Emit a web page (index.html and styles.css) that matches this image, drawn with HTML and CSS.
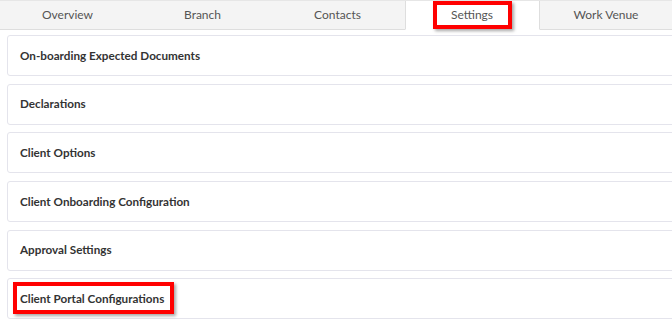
FILE: index.html
```html
<!DOCTYPE html>
<html>
<head>
<meta charset="utf-8">
<link rel="stylesheet" href="styles.css">
</head>
<body>
<div class="tabs">
  <div class="tab">Overview</div>
  <div class="tab">Branch</div>
  <div class="tab">Contacts</div>
  <div class="tab active"><span class="mark mark-tab">Settings</span></div>
  <div class="tab last">Work Venue</div>
</div>
<div class="cards">
  <div class="card">On-boarding Expected Documents</div>
  <div class="card">Declarations</div>
  <div class="card">Client Options</div>
  <div class="card">Client Onboarding Configuration</div>
  <div class="card">Approval Settings</div>
  <div class="card"><span class="mark mark-card">Client Portal Configurations</span></div>
</div>
</body>
</html>
```

FILE: styles.css
```css
* { box-sizing: border-box; }
html, body { margin: 0; padding: 0; background: #fff; }
body {
  font-family: Lato, "Open Sans", sans-serif;
  width: 672px;
  height: 323px;
  overflow: hidden;
}
.tabs {
  display: flex;
  height: 30px;
  background: #f4f4f4;
  border-top: 1px solid #e6e6e6;
}
.tab {
  flex: 0 0 135px;
  display: flex;
  align-items: center;
  justify-content: center;
  font-size: 12px;
  color: #555;
  border-bottom: 1px solid #dedede;
  padding-bottom: 1px;
}
.tab.last { flex: 1 1 auto; }
.tab.active {
  background: #fff;
  border-left: 1px solid #dedede;
  border-right: 1px solid #dedede;
  border-bottom-color: #fff;
}
.cards {
  padding: 5px 0 0 7px;
  display: flex;
  flex-direction: column;
  gap: 7.7px;
}
.card {
  height: 41px;
  margin-right: -4px;
  border: 1px solid #e4e4ec;
  border-radius: 3px;
  display: flex;
  align-items: center;
  padding-left: 12px;
  padding-bottom: 2px;
  font-size: 11.7px;
  font-weight: 700;
  color: #333;
}
.mark {
  border: 4px solid #f00;
  box-shadow: 2px 2px 3px rgba(0,0,0,0.35);
}
.mark-tab {
  padding: 2px 15px 3px 14px;
}
.mark-card {
  margin-left: -7px;
  padding: 5px 6px 5px 3px;
}
```
